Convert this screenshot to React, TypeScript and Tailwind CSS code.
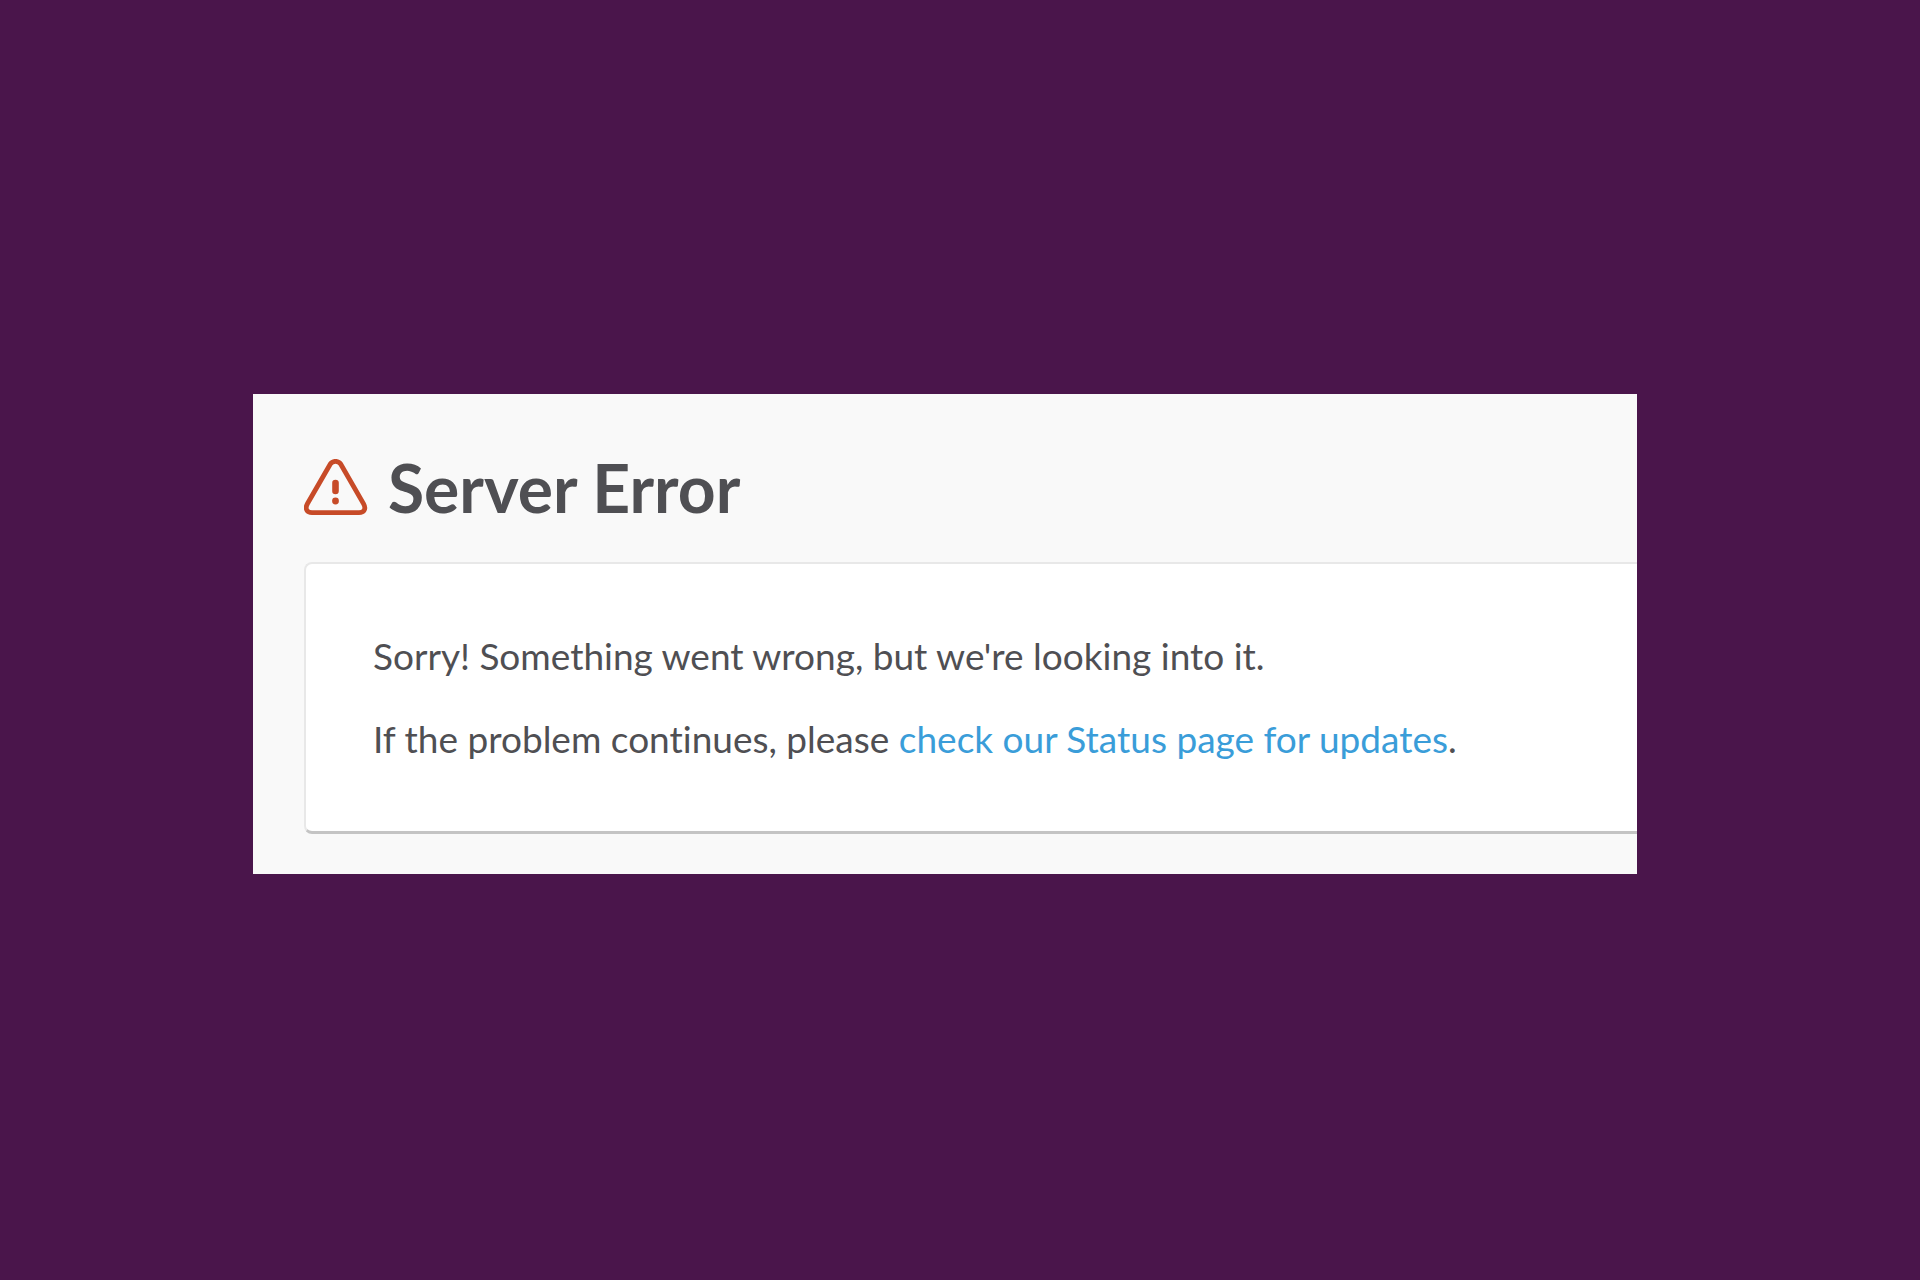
import React from 'react';

const WarningIcon: React.FC = () => (
  <svg className="w-16 h-[58px] shrink-0 text-[#c74b28]" viewBox="0 0 64 58" fill="none" aria-hidden="true">
    <path
      d="M26.2 5.2 L3.4 44.8 C0.6 49.8 3 53.6 8 53.6 H55 C60 53.6 62.4 49.8 59.6 44.8 L36.8 5.2 C34.2 1.4 28.8 1.4 26.2 5.2 Z"
      stroke="currentColor"
      strokeWidth="4.8"
      strokeLinejoin="round"
    />
    <path d="M31.5 24 V32" stroke="currentColor" strokeWidth="6.6" strokeLinecap="round" />
    <circle cx="31.5" cy="42" r="3.4" fill="currentColor" />
  </svg>
);

const App: React.FC = () => {
  return (
    <div className="min-h-screen flex items-center pl-[253px] pr-[283px] pb-3 bg-[#4a154b] font-['Lato',sans-serif] [font-variant-ligatures:none] text-[#4f4f53]">
      <main className="flex-1 min-w-0 pl-[51px] pt-[58px] pb-10 bg-[#f9f9f9] overflow-hidden">
        {/* Header */}
        <header className="flex items-center gap-5 mb-[38px]">
          <WarningIcon />
          <h1 className="text-[66px] leading-[72px] font-bold">Server Error</h1>
        </header>

        {/* Message card, runs off the right edge of the panel */}
        <section className="flex flex-col gap-7 pt-16 pb-[65px] pl-[67px] text-[37px] leading-[55px] bg-white rounded-l-lg border-2 border-r-0 border-[#e8e8e8] border-b-[3px] border-b-[#c4c4c4]">
          <p>Sorry! Something went wrong, but we're looking into it.</p>
          <p>
            If the problem continues, please{' '}
            <a href="#status" className="text-[#3a9dd9]">check our Status page for updates</a>.
          </p>
        </section>
      </main>
    </div>
  );
};

export default App;
